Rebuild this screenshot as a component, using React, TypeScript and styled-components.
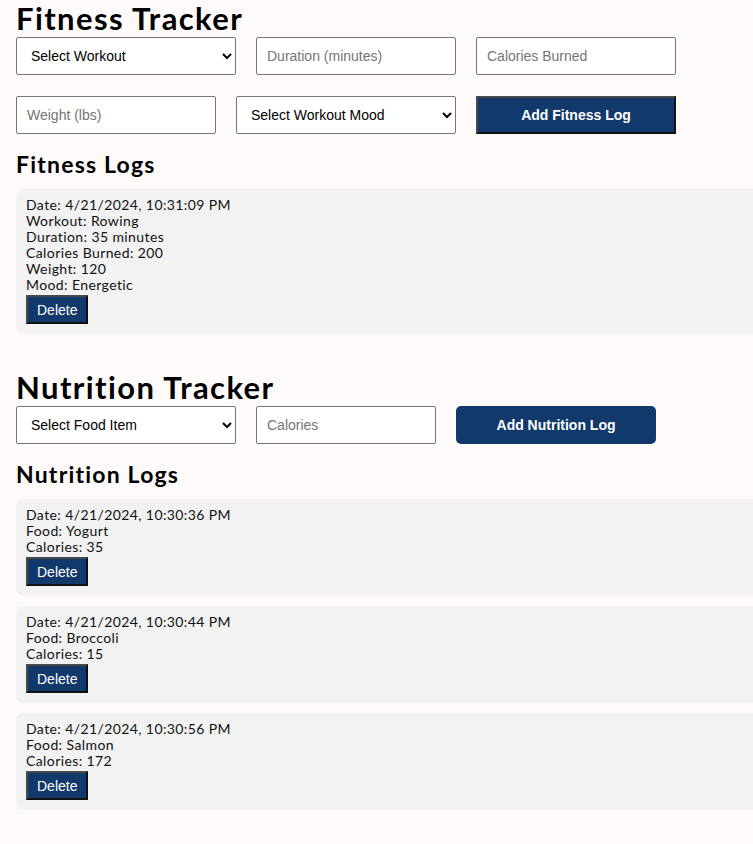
import { createGlobalStyle, styled } from "styled-components"

const GlobalStyle = createGlobalStyle`
  html, body {
    margin: 0;
    padding: 0;
    background-color: #fffafa;
    overflow-x: hidden;
  }
  body {
    font-family: "Lato", "Open Sans", sans-serif;
    color: #111;
  }
`

const Page = styled.div`
  padding: 0 16px 30px 16px;
`

const Section = styled.section`
  & + & {
    margin-top: 35px;
  }
`

const Title = styled.h1`
  margin: 0 0 1px 0;
  font-size: 31px;
  line-height: 36px;
  letter-spacing: 1.4px;
  font-weight: 700;
  color: #000;
`

const SubTitle = styled.h2`
  margin: 16px 0 11px 0;
  font-size: 23px;
  line-height: 28px;
  letter-spacing: 1.2px;
  font-weight: 700;
  color: #000;
`

const Form = styled.div`
  display: flex;
  flex-wrap: wrap;
  gap: 21px 20px;
  max-width: 680px;
`

const Field = styled.input<{ $w: number }>`
  box-sizing: border-box;
  width: ${(p) => p.$w}px;
  height: 38px;
  padding: 0 10px;
  border: 1px solid #767676;
  border-radius: 2px;
  background: #fff;
  font-family: "Liberation Sans", Arial, sans-serif;
  font-size: 14px;
  color: #000;
  &::placeholder {
    color: #757575;
  }
`

const Select = styled.select`
  box-sizing: border-box;
  width: 220px;
  height: 38px;
  padding: 0 6px 0 10px;
  border: 1px solid #767676;
  border-radius: 2px;
  background: #fff;
  font-family: "Liberation Sans", Arial, sans-serif;
  font-size: 14px;
  color: #000;
`

const AddButton = styled.button<{ $rounded?: boolean }>`
  box-sizing: border-box;
  width: 200px;
  height: 38px;
  background-color: #12396b;
  color: #fff;
  font-family: "Liberation Sans", Arial, sans-serif;
  font-size: 14px;
  font-weight: 700;
  cursor: pointer;
  border: ${(p) => (p.$rounded ? "none" : "2px solid")};
  border-color: #4a4a4a #111 #111 #4a4a4a;
  border-radius: ${(p) => (p.$rounded ? "5px" : "0")};
`

const LogList = styled.div`
  display: flex;
  flex-direction: column;
  gap: 10px;
`

const LogCard = styled.div`
  width: calc(100% + 20px);
  padding: 8px 10px 10px 10px;
  background-color: #f2f2f2;
  border-radius: 8px;
  font-size: 14px;
  line-height: 16px;
  letter-spacing: 0.4px;
  color: #111;
`

const LogLine = styled.div``

const DeleteButton = styled.button`
  box-sizing: border-box;
  display: block;
  margin-top: 2px;
  height: 29px;
  padding: 0 9px;
  background-color: #12396b;
  color: #fff;
  font-family: "Liberation Sans", Arial, sans-serif;
  font-size: 14px;
  letter-spacing: 0;
  border: 2px solid;
  border-color: #4a4a4a #111 #111 #4a4a4a;
  cursor: pointer;
`

const fitnessLogs = [
  {
    date: "4/21/2024, 10:31:09 PM",
    workout: "Rowing",
    duration: 35,
    calories: 200,
    weight: 120,
    mood: "Energetic",
  },
]

const nutritionLogs = [
  { date: "4/21/2024, 10:30:36 PM", food: "Yogurt", calories: 35 },
  { date: "4/21/2024, 10:30:44 PM", food: "Broccoli", calories: 15 },
  { date: "4/21/2024, 10:30:56 PM", food: "Salmon", calories: 172 },
]

export default function App() {
  return (
    <Page>
      <GlobalStyle />
      <Section>
        <Title>Fitness Tracker</Title>
        <Form>
          <Select defaultValue="">
            <option value="">Select Workout</option>
            <option>Running</option>
            <option>Rowing</option>
            <option>Cycling</option>
          </Select>
          <Field $w={200} type="number" placeholder="Duration (minutes)" />
          <Field $w={200} type="number" placeholder="Calories Burned" />
          <Field $w={200} type="number" placeholder="Weight (lbs)" />
          <Select defaultValue="">
            <option value="">Select Workout Mood</option>
            <option>Energetic</option>
            <option>Tired</option>
          </Select>
          <AddButton>Add Fitness Log</AddButton>
        </Form>
        <SubTitle>Fitness Logs</SubTitle>
        <LogList>
          {fitnessLogs.map((log) => (
            <LogCard key={log.date}>
              <LogLine>Date: {log.date}</LogLine>
              <LogLine>Workout: {log.workout}</LogLine>
              <LogLine>Duration: {log.duration} minutes</LogLine>
              <LogLine>Calories Burned: {log.calories}</LogLine>
              <LogLine>Weight: {log.weight}</LogLine>
              <LogLine>Mood: {log.mood}</LogLine>
              <DeleteButton>Delete</DeleteButton>
            </LogCard>
          ))}
        </LogList>
      </Section>
      <Section>
        <Title>Nutrition Tracker</Title>
        <Form>
          <Select defaultValue="">
            <option value="">Select Food Item</option>
            <option>Yogurt</option>
            <option>Broccoli</option>
            <option>Salmon</option>
          </Select>
          <Field $w={180} type="number" placeholder="Calories" />
          <AddButton $rounded>Add Nutrition Log</AddButton>
        </Form>
        <SubTitle>Nutrition Logs</SubTitle>
        <LogList>
          {nutritionLogs.map((log) => (
            <LogCard key={log.date}>
              <LogLine>Date: {log.date}</LogLine>
              <LogLine>Food: {log.food}</LogLine>
              <LogLine>Calories: {log.calories}</LogLine>
              <DeleteButton>Delete</DeleteButton>
            </LogCard>
          ))}
        </LogList>
      </Section>
    </Page>
  )
}
